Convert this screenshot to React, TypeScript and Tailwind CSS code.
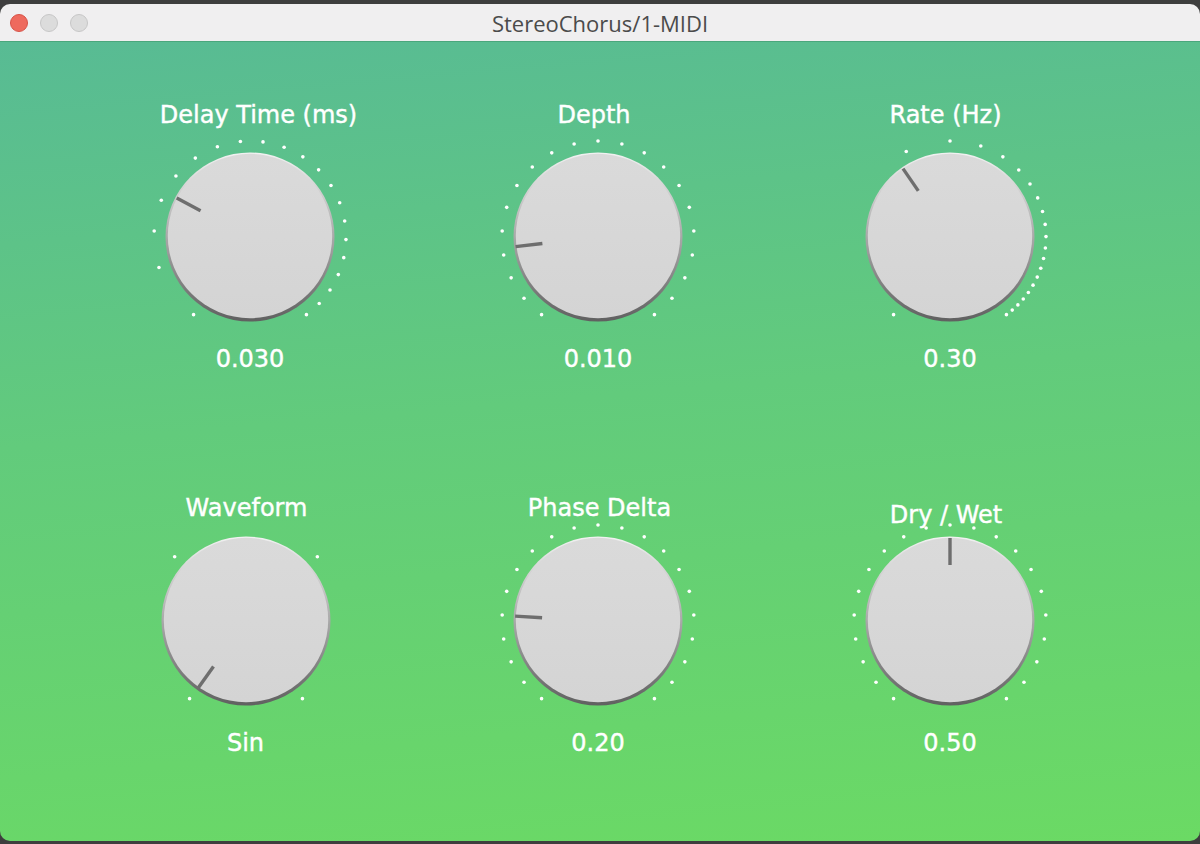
import React from 'react';

const lin = (n: number) => Array.from({ length: n }, (_, i) => -144 + (288 * i) / (n - 1));
const skew = (n: number, s: number) => Array.from({ length: n }, (_, i) => -144 + 288 * Math.pow(i / (n - 1), s));

interface DialProps {
  id: string;
  angle: number;
  ticks: number[];
  className?: string;
}

const Dial: React.FC<DialProps> = ({ id, angle, ticks, className }) => {
  const pt = (a: number, r: number) => {
    const rad = (a * Math.PI) / 180;
    return [100 + r * Math.sin(rad), 100 - r * Math.cos(rad)];
  };
  const [x1, y1] = pt(angle, 56);
  const [x2, y2] = pt(angle, 83);
  return (
    <svg width="200" height="200" viewBox="0 0 200 200" className={className}>
      <defs>
        <linearGradient id={`rim-${id}`} x1="0" y1="0" x2="0" y2="1">
          <stop offset="0" stopColor="#f2f2f2" />
          <stop offset="0.45" stopColor="#b0b0b0" />
          <stop offset="1" stopColor="#606060" />
        </linearGradient>
        <linearGradient id={`face-${id}`} x1="0" y1="0" x2="0" y2="1">
          <stop offset="0" stopColor="#dadada" />
          <stop offset="1" stopColor="#d4d4d4" />
        </linearGradient>
      </defs>
      {ticks.map((a, i) => {
        const [x, y] = pt(a, 96);
        return <circle key={i} cx={x} cy={y} r="1.8" fill="#ffffff" />;
      })}
      <circle cx="100" cy="100" r="84.5" fill={`url(#rim-${id})`} />
      <circle cx="100" cy="99" r="82.2" fill={`url(#face-${id})`} />
      <line x1={x1} y1={y1} x2={x2} y2={y2} stroke="#6e6e6e" strokeWidth="3.4" />
    </svg>
  );
};

const font =
  "font-['DejaVu_Sans',sans-serif] text-[24px] leading-[28px] text-white [-webkit-text-stroke:0.4px_#ffffff]";

export default function App() {
  return (
    <div className="w-[1200px] h-[844px] bg-[#3e3e3e] pt-[4px] overflow-hidden">
      <div className="h-[837px] rounded-[10px] overflow-hidden flex flex-col">
        {/* Title bar */}
        <div className="relative h-[38px] shrink-0 bg-[#f0eff0] border-b border-[#4aa77c] flex items-center justify-center">
          <div className="absolute left-[10px] top-[10px] flex gap-[12px]">
            <span className="w-[18px] h-[18px] rounded-full bg-[#ee6a5e] border border-[#d65247]" />
            <span className="w-[18px] h-[18px] rounded-full bg-[#dcdcdc] border border-[#c6c6c6]" />
            <span className="w-[18px] h-[18px] rounded-full bg-[#dcdcdc] border border-[#c6c6c6]" />
          </div>
          <span className="font-['Open_Sans',sans-serif] text-[22px] leading-none text-[#4b4b4b] mt-[1px]">
            StereoChorus/1-MIDI
          </span>
        </div>

        {/* Content */}
        <div className="flex-1 bg-[linear-gradient(175deg,#58bb94_0%,#62cb7c_45%,#6bda64_100%)] pt-[59px] pl-[75px]">
          <div className="flex">
            <div className="w-[350px] flex flex-col items-center">
              <span className={`${font} ml-[17px]`}>Delay Time (ms)</span>
              <Dial id="a" angle={-62} ticks={skew(21, 0.699)} className="mt-[8px]" />
              <span className={`${font} mt-[8px]`}>0.030</span>
            </div>
            <div className="w-[346px] flex flex-col items-center">
              <span className={`${font} mr-[8px]`}>Depth</span>
              <Dial id="b" angle={-96.7} ticks={lin(21)} className="mt-[8px]" />
              <span className={`${font} mt-[8px]`}>0.010</span>
            </div>
            <div className="w-[358px] flex flex-col items-center">
              <span className={`${font} mr-[9px]`}>Rate (Hz)</span>
              <Dial id="c" angle={-34.5} ticks={skew(21, 0.301)} className="mt-[8px]" />
              <span className={`${font} mt-[8px]`}>0.30</span>
            </div>
          </div>

          <div className="flex mt-[121px]">
            <div className="w-[350px] flex flex-col items-center">
              <span className={`${font} mr-[7px]`}>Waveform</span>
              <Dial id="d" angle={-144.5} ticks={lin(4)} className="-mt-px mr-[8px]" />
              <span className={`${font} mt-[8px] mr-[9px]`}>Sin</span>
            </div>
            <div className="w-[346px] flex flex-col items-center">
              <span className={`${font} ml-[3px]`}>Phase Delta</span>
              <Dial id="e" angle={-86.6} ticks={lin(21)} className="-mt-px" />
              <span className={`${font} mt-[8px]`}>0.20</span>
            </div>
            <div className="w-[358px] flex flex-col items-center">
              <span className={`${font} relative z-10 mt-[7px] mr-[8px]`}>Dry / Wet</span>
              <Dial id="f" angle={0} ticks={lin(21)} className="-mt-[8px]" />
              <span className={`${font} mt-[8px]`}>0.50</span>
            </div>
          </div>
        </div>
      </div>
    </div>
  );
}
